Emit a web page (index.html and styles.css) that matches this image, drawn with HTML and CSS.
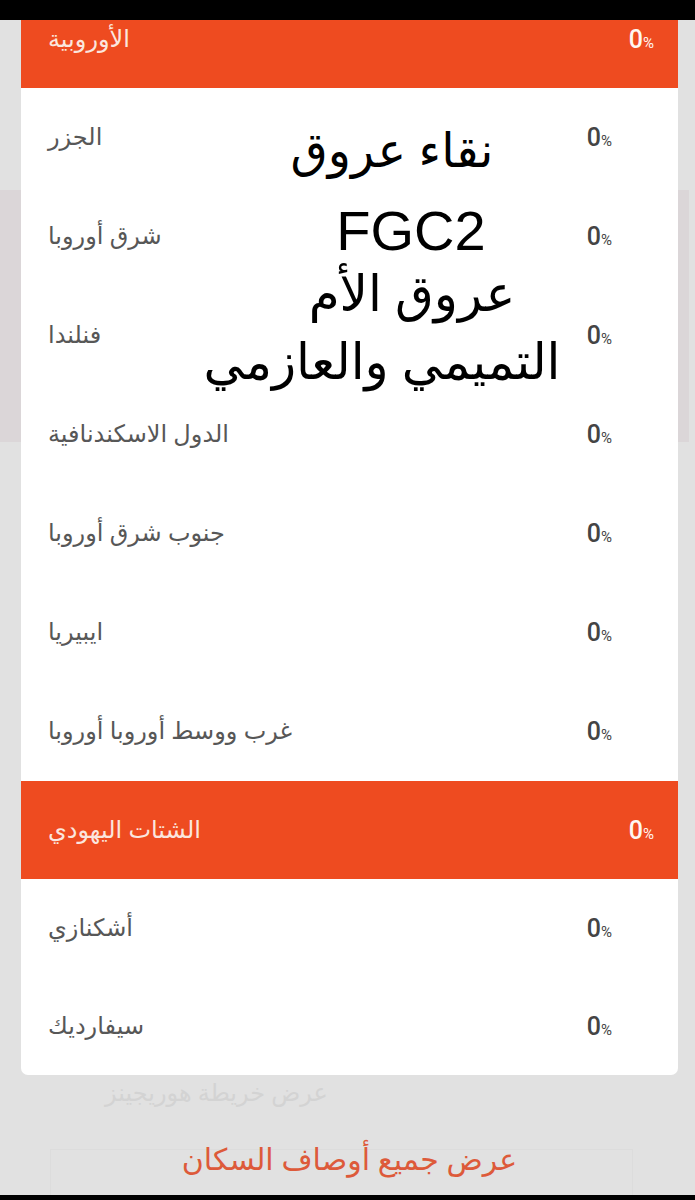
FILE: index.html
```html
<!DOCTYPE html>
<html lang="ar">
<head>
<meta charset="utf-8">
<link rel="stylesheet" href="styles.css">
</head>
<body>
<div class="status"></div>
<div class="screen">
  <div class="backdrop"></div>
  <div class="card">
    <div class="row head"><span class="label">الأوروبية</span><span class="pct">0<small>%</small></span></div>
    <div class="row"><span class="label">الجزر</span><span class="pct">0<small>%</small></span></div>
    <div class="row"><span class="label">شرق أوروبا</span><span class="pct">0<small>%</small></span></div>
    <div class="row"><span class="label">فنلندا</span><span class="pct">0<small>%</small></span></div>
    <div class="row"><span class="label">الدول الاسكندنافية</span><span class="pct">0<small>%</small></span></div>
    <div class="row"><span class="label">جنوب شرق أوروبا</span><span class="pct">0<small>%</small></span></div>
    <div class="row"><span class="label">ايبيريا</span><span class="pct">0<small>%</small></span></div>
    <div class="row"><span class="label">غرب ووسط أوروبا أوروبا</span><span class="pct">0<small>%</small></span></div>
    <div class="row head"><span class="label">الشتات اليهودي</span><span class="pct">0<small>%</small></span></div>
    <div class="row"><span class="label">أشكنازي</span><span class="pct">0<small>%</small></span></div>
    <div class="row last"><span class="label">سيفارديك</span><span class="pct">0<small>%</small></span></div>
  </div>
  <div class="ghost">عرض خريطة هوريجينز</div>
  <div class="cta"><span>عرض جميع أوصاف السكان</span></div>
  <div class="overlay">
    <div class="ov1">نقاء عروق</div>
    <div class="ov2">FGC2</div>
    <div class="ov3">عروق الأم</div>
    <div class="ov4">التميمي والعازمي</div>
  </div>
</div>
<div class="navbar"></div>
</body>
</html>
```

FILE: styles.css
```css
html, body {
  margin: 0;
  padding: 0;
}
body {
  width: 695px;
  height: 1200px;
  background: #000;
  font-family: "Noto Sans", "DejaVu Sans", sans-serif;
  overflow: hidden;
}
.status {
  height: 20px;
  background: #000;
}
.screen {
  position: relative;
  height: 1175px;
  overflow: hidden;
  background: #e1e1e1;
}
.backdrop {
  position: absolute;
  left: 0;
  right: 6px;
  top: 170px;
  height: 252px;
  background: #dbd6d8;
}
.card {
  position: relative;
  margin: -30px 17px 0 21px;
  background: #fff;
  border-radius: 0 0 7px 7px;
  overflow: hidden;
}
.row {
  height: 99px;
  display: flex;
  align-items: center;
  justify-content: space-between;
  padding: 0 66px 0 27px;
}
.row.last {
  height: 97px;
}
.row .label {
  font-size: 24px;
  color: #575757;
  margin-top: -4px;
}
.pct {
  font-family: Roboto, "Noto Sans", sans-serif;
  font-weight: 500;
  font-size: 25px;
  color: #444;
}
.pct small {
  font-size: 15px;
  font-weight: 400;
  margin-left: 0;
}
.row.head {
  height: 98px;
  background: #ee4b20;
  padding-right: 24px;
}
.row.head .label {
  color: #fbe6de;
}
.row.head .pct {
  color: #fff6f2;
}
.ghost {
  margin: 0 0 0 105px;
  font-size: 24px;
  color: #d3d3d3;
  height: 44px;
}
.cta {
  margin: 30px 62px 0 50px;
  border-top: 1px solid #dcdcdc;
  border-left: 1px solid #dcdcdc;
  border-right: 1px solid #dcdcdc;
  height: 60px;
  display: flex;
  justify-content: center;
}
.cta span {
  font-size: 30px;
  color: #dd5a3a;
  margin-top: -12px;
  margin-left: 16px;
}
.overlay {
  position: absolute;
  left: 190px;
  top: 105px;
  width: 400px;
  text-align: center;
  color: #000;
  line-height: 1;
}
.ov1 {
  font-size: 48px;
  margin-left: 4px;
}
.ov2 {
  font-family: "Liberation Sans", Arial, sans-serif;
  font-size: 56px;
  margin-top: 30px;
  margin-left: 42px;
}
.ov3 {
  font-size: 50px;
  margin-top: 8px;
  margin-left: 44px;
}
.ov4 {
  font-size: 50px;
  margin-top: 18px;
  margin-left: -16px;
}
.navbar {
  height: 5px;
  background: #000;
}
```
